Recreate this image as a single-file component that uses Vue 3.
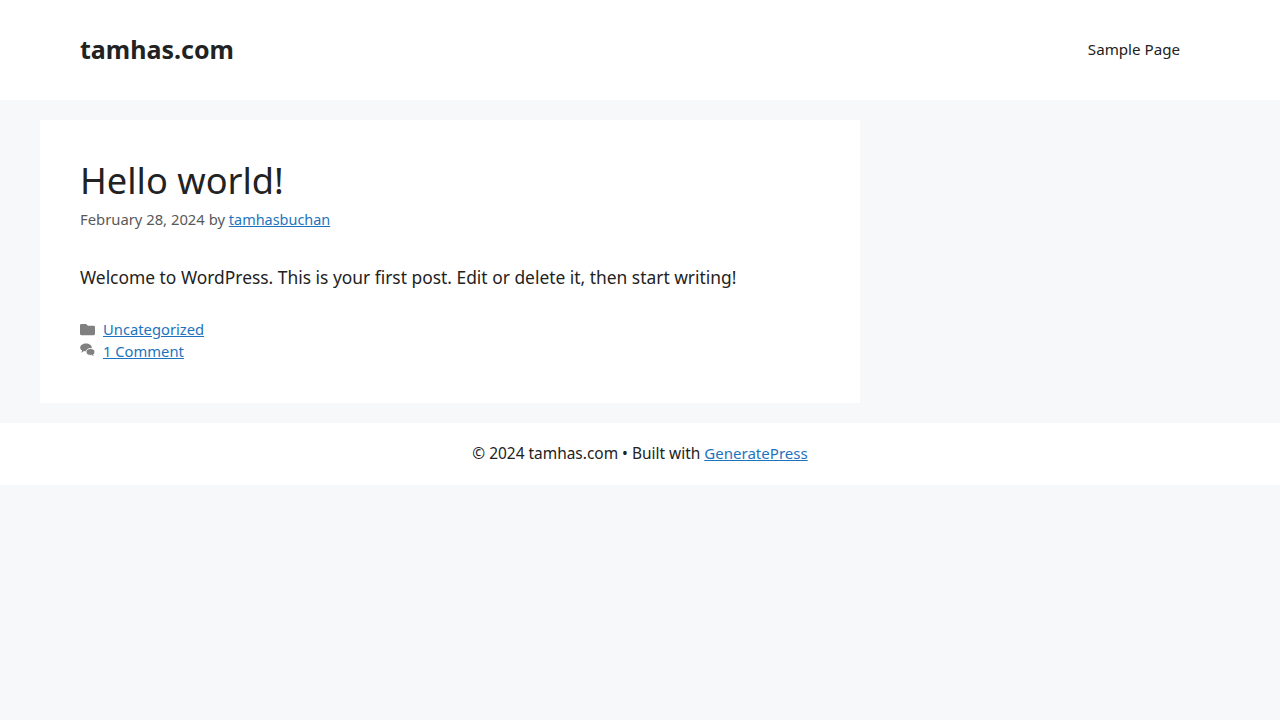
<script setup>
const siteTitle = 'tamhas.com'
</script>

<template>
  <div class="page">
    <header class="header">
      <div class="title">{{ siteTitle }}</div>
      <nav class="nav">Sample Page</nav>
    </header>
    <main class="main">
      <article class="card">
        <h1 class="h1">Hello world!</h1>
        <div class="meta"><span class="meta-text">February 28, 2024 by </span><a href="#">tamhasbuchan</a></div>
        <p class="body">Welcome to WordPress. This is your first post. Edit or delete it, then start writing!</p>
        <div class="foot">
          <div class="row">
            <svg class="ico" viewBox="0 0 512 512"><path fill="currentColor" d="M464 128H272l-54.63-54.63c-6-6-14.14-9.37-22.63-9.37H48C21.49 64 0 85.49 0 112v288c0 26.51 21.49 48 48 48h416c26.51 0 48-21.49 48-48V176c0-26.51-21.49-48-48-48z"/></svg>
            <a href="#">Uncategorized</a>
          </div>
          <div class="row">
            <svg class="ico ico-tall" viewBox="0 0 15 16">
              <path fill="currentColor" d="M6 .4c3.2 0 5.8 1.800 5.800 4s-2.600 4-5.800 4c-.7 0-1.400-.1-2-.3C3.100 9 2 9.500 1 9.700c.6-.7 1-1.400 1.100-2.200C.8 6.800.2 5.700.2 4.400c0-2.200 2.600-4 5.800-4z"/>
              <path fill="currentColor" stroke="#fff" stroke-width="1" d="M10.500 5.500c2.500 0 4.500 1.500 4.500 3.400 0 1-.5 1.900-1.400 2.500.1.900.6 1.800 1.300 2.600-1.200-.2-2.400-.8-3.300-1.700-.4.100-.7.100-1.100.1-2.500 0-4.500-1.500-4.500-3.500s2-3.400 4.500-3.400z"/>
            </svg>
            <a href="#">1 Comment</a>
          </div>
        </div>
      </article>
    </main>
    <footer class="footer"><span class="footer-text">© 2024 tamhas.com • Built with </span><a href="#" class="footer-link">GeneratePress</a></footer>
  </div>
</template>

<style scoped>
.page { min-height: 720px; background: #f7f8f9; font-family: "Noto Sans", "Open Sans", sans-serif; color: #222; font-size: 17.4px; }
.header { height: 100px; box-sizing: border-box; background: #fff; padding: 0 100px 2px 80px; display: flex; justify-content: space-between; align-items: center; }
.title { font-size: 25px; font-weight: 700; color: #222; }
.nav { font-size: 15.15px; color: #222; }
.main { padding: 20px 40px; }
.card { width: 820px; height: 283px; box-sizing: border-box; background: #fff; padding: 40px; }
.h1 { margin: 0; font-size: 36.2px; font-weight: 400; line-height: 41px; }
.meta { font-size: 14.45px; color: #595959; line-height: 22px; margin-top: 7px; white-space: pre-wrap; }
.meta-text { font-size: 14.8px; }
.body { margin: 33px 0 0; line-height: 26px; }
.foot { margin-top: 28px; font-size: 14.75px; line-height: 22px; }
.row { display: flex; align-items: center; gap: 8px; }
.ico { width: 15px; height: 15px; color: #808080; }
.ico-tall { height: 16px; }
a { color: #1e73be; text-decoration: underline; }
.footer { background: #fff; height: 62px; padding-bottom: 2px; box-sizing: border-box; display: flex; align-items: center; justify-content: center; font-size: 15.45px; white-space: pre-wrap; }
.footer-link { font-size: 15.05px; }
</style>
